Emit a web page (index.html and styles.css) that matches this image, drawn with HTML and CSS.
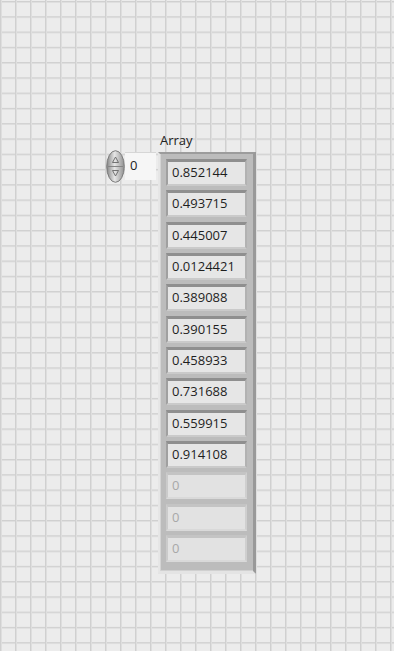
FILE: index.html
```html
<!DOCTYPE html>
<html lang="en">

  <head>
    <meta charset="UTF-8">
    <meta name="viewport" content="width=device-width, initial-scale=1.0">
    <title>Front Panel</title>
    <link rel="stylesheet" href="styles.css">
  </head>

  <body>
    <div class="panel">
      <div class="array-label">Array</div>

      <div class="array-row">
        <div class="index">
          <div class="spinner">
            <svg width="19" height="33" viewBox="0 0 19 33">
              <defs>
                <linearGradient id="oval" x1="0" y1="0" x2="1" y2="0">
                  <stop offset="0" stop-color="#858585" />
                  <stop offset="0.45" stop-color="#e6e6e6" />
                  <stop offset="1" stop-color="#909090" />
                </linearGradient>
              </defs>
              <ellipse cx="9.5" cy="16.5" rx="8.8" ry="15.8" fill="url(#oval)" stroke="#737373" stroke-width="0.9" />
              <line x1="2" y1="16.5" x2="17" y2="16.5" stroke="#858585" stroke-width="1" />
              <path d="M9.5 7 L12.5 12.5 L6.5 12.5 Z" fill="none" stroke="#666" stroke-width="0.9" />
              <path d="M9.5 26 L12.5 20.5 L6.5 20.5 Z" fill="none" stroke="#666" stroke-width="0.9" />
            </svg>
          </div>
          <div class="index-box">0</div>
        </div>

        <div class="array-frame">
          <div class="element">0.852144</div>
          <div class="element">0.493715</div>
          <div class="element">0.445007</div>
          <div class="element">0.0124421</div>
          <div class="element">0.389088</div>
          <div class="element">0.390155</div>
          <div class="element">0.458933</div>
          <div class="element">0.731688</div>
          <div class="element">0.559915</div>
          <div class="element">0.914108</div>
          <div class="element empty">0</div>
          <div class="element empty">0</div>
          <div class="element empty">0</div>
        </div>
      </div>
    </div>
  </body>

</html>
```

FILE: styles.css
```css
html,
body {
  margin: 0;
  padding: 0;
}

body {
  font-family: "Open Sans", "Noto Sans", sans-serif;
  color: #222;
}

/* grid: vertical lines every 15px, horizontal every ~15.27px */
.panel {
  box-sizing: border-box;
  width: 394px;
  height: 651px;
  padding: 131px 0 0 106px;
  background-color: #ececec;
  background-image:
    linear-gradient(to right, #d0d0d0 0, #d0d0d0 1px, #dedede 1px, #dedede 2px, transparent 2px),
    linear-gradient(to bottom, #d0d0d0 0, #d0d0d0 1px, #dedede 1px, #dedede 2px, transparent 2px);
  background-size: 15px 100%, 100% 15.27px;
  background-position: 15px 0, 0 1px;
}

.array-label {
  margin-left: 54px;
  font-size: 13px;
  line-height: 18px;
  height: 20px;
}

.array-row {
  display: flex;
  align-items: flex-start;
}

.index {
  display: flex;
  align-items: flex-start;
  margin-top: -1px;
}

.spinner {
  width: 19px;
  height: 33px;
}

.spinner svg {
  display: block;
}

.index-box {
  box-sizing: border-box;
  width: 31px;
  height: 28px;
  margin-top: 2px;
  padding-left: 5px;
  background-color: #f6f6f6;
  border-top: 1px solid #d6d6d6;
  font-size: 13px;
  line-height: 24px;
}

.array-frame {
  box-sizing: border-box;
  width: 98px;
  padding: 5px 6px 9px 6px;
  margin-left: 2px;
  margin-top: 1px;
  display: flex;
  flex-direction: column;
  gap: 4.33px;
  background-color: #bcbcbc;
  border-top: 2px solid #9c9c9c;
  border-right: 3px solid #999;
  border-left: 2px solid #e6e6e6;
  border-bottom: 3px solid #e4e4e4;
  box-shadow: inset 1px 0 0 #d4d4d4, inset 0 -1px 0 #d0d0d0;
}

.element {
  box-sizing: border-box;
  height: 27px;
  padding-left: 4px;
  background-color: #e6e6e6;
  border-top: 3px solid #8f8f8f;
  border-left: 2px solid #a0a0a0;
  border-right: 2px solid #b2b2b2;
  border-bottom: 2px solid #cacaca;
  font-size: 13px;
  line-height: 21px;
  color: #1e1e1e;
}

.element.empty {
  color: #a8a8a8;
  background-color: #e2e2e2;
  border-top-color: #c4c4c4;
  border-left-color: #cbcbcb;
  border-right-color: #cfcfcf;
  border-bottom-color: #d9d9d9;
}
```
